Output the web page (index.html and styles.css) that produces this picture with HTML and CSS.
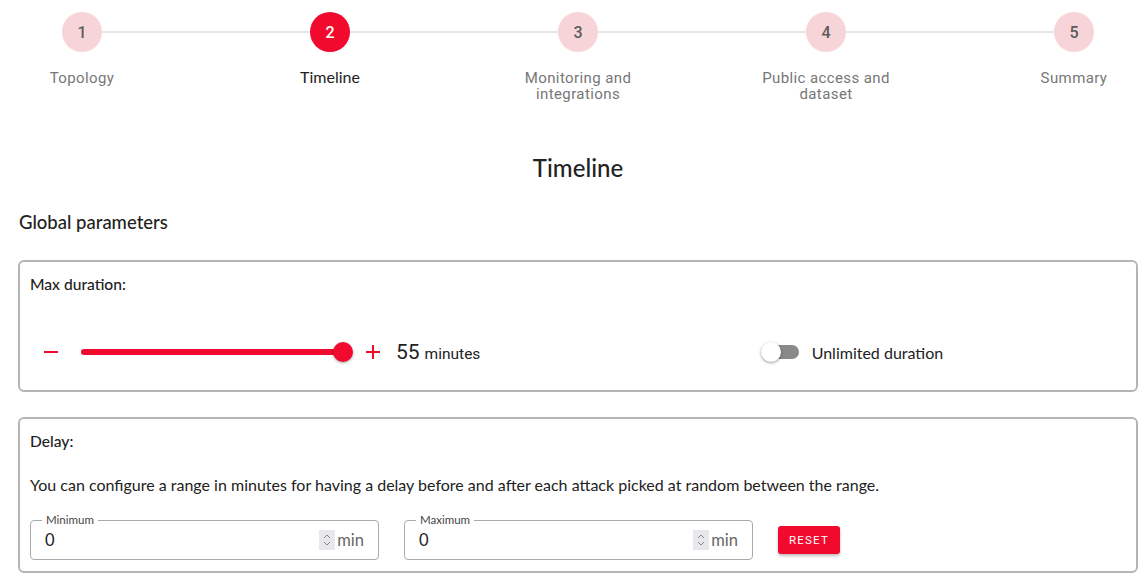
FILE: index.html
```html
<!DOCTYPE html>
<html lang="en">
<head>
    <meta charset="UTF-8">
    <meta name="viewport" content="width=device-width, initial-scale=1.0">
    <title>Timeline</title>
    <link rel="stylesheet" href="styles.css">
</head>
<body>
    <div class="page">
        <ol class="stepper">
            <li class="step"><span class="dot">1</span><span class="step-label">Topology</span></li>
            <li class="step active"><span class="dot">2</span><span class="step-label">Timeline</span></li>
            <li class="step"><span class="dot">3</span><span class="step-label">Monitoring and<br>integrations</span></li>
            <li class="step"><span class="dot">4</span><span class="step-label">Public access and<br>dataset</span></li>
            <li class="step"><span class="dot">5</span><span class="step-label">Summary</span></li>
        </ol>

        <h1 class="title">Timeline</h1>
        <h2 class="section-title">Global parameters</h2>

        <section class="card">
            <h3 class="card-title">Max duration:</h3>
            <div class="duration-row">
                <div class="slider-group">
                    <button class="icon-btn" type="button" aria-label="decrease">
                        <svg width="16" height="16" viewBox="0 0 16 16"><path d="M1 8h14" stroke="currentColor" stroke-width="2"/></svg>
                    </button>
                    <div class="slider">
                        <div class="slider-track"></div>
                        <div class="slider-thumb"></div>
                    </div>
                    <button class="icon-btn" type="button" aria-label="increase">
                        <svg width="16" height="16" viewBox="0 0 16 16"><path d="M1 8h14M8 1v14" stroke="currentColor" stroke-width="2"/></svg>
                    </button>
                    <span class="value">55</span><span class="unit">minutes</span>
                </div>
                <label class="switch-group">
                    <span class="switch"><span class="switch-thumb"></span></span>
                    Unlimited duration
                </label>
            </div>
        </section>

        <section class="card">
            <h3 class="card-title">Delay:</h3>
            <p class="card-text">You can configure a range in minutes for having a delay before and after each attack picked at random between the range.</p>
            <div class="range-row">
                <fieldset class="field">
                    <legend>Minimum</legend>
                    <input type="text" value="0">
                    <span class="spin">
                        <svg width="10" height="16" viewBox="0 0 10 16"><path d="M2 6l3-3 3 3M2 10l3 3 3-3" fill="none" stroke="#888" stroke-width="1"/></svg>
                    </span>
                    <span class="suffix">min</span>
                </fieldset>
                <fieldset class="field">
                    <legend>Maximum</legend>
                    <input type="text" value="0">
                    <span class="spin">
                        <svg width="10" height="16" viewBox="0 0 10 16"><path d="M2 6l3-3 3 3M2 10l3 3 3-3" fill="none" stroke="#888" stroke-width="1"/></svg>
                    </span>
                    <span class="suffix">min</span>
                </fieldset>
                <button class="reset" type="button">Reset</button>
            </div>
        </section>
    </div>
</body>
</html>
```

FILE: styles.css
```css
body {
    margin: 0;
    font-family: Lato, "Liberation Sans", sans-serif;
    color: #222;
    background: #fff;
}

.page {
    padding: 0 8px 0 18px;
}

/* stepper */
.stepper {
    list-style: none;
    margin: 0 -50px 0 -60px;
    padding: 12px 0 0 0;
    display: grid;
    grid-template-columns: repeat(5, 248px);
}

.step {
    position: relative;
    display: flex;
    flex-direction: column;
    align-items: center;
}

.step + .step::before {
    content: "";
    position: absolute;
    top: 19px;
    left: calc(-50% + 20px);
    right: calc(50% + 20px);
    height: 2px;
    background: #e6e6e6;
}

.dot {
    width: 40px;
    height: 40px;
    border-radius: 50%;
    background: #f7d4d8;
    color: #5c5c5c;
    display: flex;
    align-items: center;
    justify-content: center;
    font-family: Roboto, sans-serif;
    font-size: 16px;
    font-weight: 500;
}

.step-label {
    margin-top: 18px;
    font-family: Roboto, sans-serif;
    font-size: 15px;
    letter-spacing: 0.4px;
    line-height: 16px;
    color: #777;
    text-align: center;
}

.active .dot {
    background: #f20a2e;
    color: #fff;
}

.active .step-label {
    font-family: Lato, sans-serif;
    font-size: 16px;
    letter-spacing: 0;
    margin-top: 17px;
    color: #222;
}

.title {
    margin: 52px 0 0 0;
    text-align: center;
    font-size: 24px;
    line-height: 28px;
    font-weight: 500;
}

.section-title {
    margin: 29px 0 0 1px;
    font-size: 18.5px;
    line-height: 22px;
    font-weight: 500;
}

/* cards */
.card {
    margin-top: 27px;
    border: 2px solid #b5b5b5;
    border-radius: 6px;
    padding: 12px 10px 11px 10px;
}

.card + .card {
    margin-top: 25px;
}

.card-title {
    margin: 0;
    font-size: 15.6px;
    line-height: 20px;
    font-weight: 500;
}

.duration-row {
    margin-top: 42px;
    margin-bottom: 11px;
    display: grid;
    grid-template-columns: 2fr 1fr;
    align-items: center;
}

.slider-group {
    display: flex;
    align-items: center;
}

.icon-btn {
    background: none;
    border: none;
    padding: 0;
    margin: 0 0 0 13px;
    color: #f20a2e;
    display: flex;
}

.slider {
    position: relative;
    width: 262px;
    height: 32px;
    margin: 0 22px 0 22px;
}

.slider-track {
    position: absolute;
    top: 13px;
    left: 0;
    right: 0;
    height: 6px;
    border-radius: 3px;
    background: #f20a2e;
}

.slider-thumb {
    position: absolute;
    top: 6px;
    right: -10px;
    width: 20px;
    height: 20px;
    border-radius: 50%;
    background: #f20a2e;
    box-shadow: 0 1px 3px rgba(0, 0, 0, 0.35);
}

.slider + .icon-btn {
    margin-left: 0;
}

.value {
    margin-left: 15px;
    font-family: Roboto, sans-serif;
    font-size: 21px;
}

.unit {
    margin-left: 5px;
    font-family: Roboto, sans-serif;
    font-size: 15.5px;
    padding-top: 4px;
}

.switch-group {
    display: flex;
    align-items: center;
    font-size: 16px;
}

.switch {
    position: relative;
    width: 40px;
    height: 20px;
    margin-right: 11px;
}

.switch::before {
    content: "";
    position: absolute;
    top: 3px;
    left: 4px;
    width: 34px;
    height: 14px;
    border-radius: 7px;
    background: #8a8a8a;
}

.switch-thumb {
    position: absolute;
    top: 0;
    left: 0;
    width: 20px;
    height: 20px;
    border-radius: 50%;
    background: #fff;
    box-shadow: 0 1px 3px rgba(0, 0, 0, 0.4);
}

.card-text {
    margin: 24px 0 0 0;
    font-size: 16px;
    line-height: 20px;
}

.range-row {
    margin-top: 18px;
    display: flex;
    align-items: center;
    gap: 25px;
}

.field {
    margin: 0;
    width: 349px;
    box-sizing: border-box;
    border: 1px solid #aaa;
    border-radius: 4px;
    padding: 0 14px 7px 14px;
    display: flex;
    align-items: center;
}

.field legend {
    margin-left: -3px;
    padding: 0 4px;
    font-size: 11.5px;
    line-height: 14px;
    color: #444;
}

.field input {
    flex: 1;
    min-width: 0;
    border: none;
    outline: none;
    padding: 0;
    height: 25px;
    font-family: Lato, sans-serif;
    font-size: 16.5px;
    color: #222;
}

.spin {
    display: flex;
    align-items: center;
    justify-content: center;
    width: 16px;
    height: 20px;
    background: #e8e8ec;
}

.suffix {
    margin-left: 2px;
    font-size: 16.5px;
    color: #666;
}

.reset {
    margin-top: 7px;
    background: #f20a2e;
    color: #fff;
    border: none;
    border-radius: 3px;
    padding: 7px 11px;
    font-family: Roboto, sans-serif;
    font-size: 11.5px;
    letter-spacing: 1.2px;
    text-transform: uppercase;
    box-shadow: 0 2px 3px rgba(0, 0, 0, 0.25);
}
```
